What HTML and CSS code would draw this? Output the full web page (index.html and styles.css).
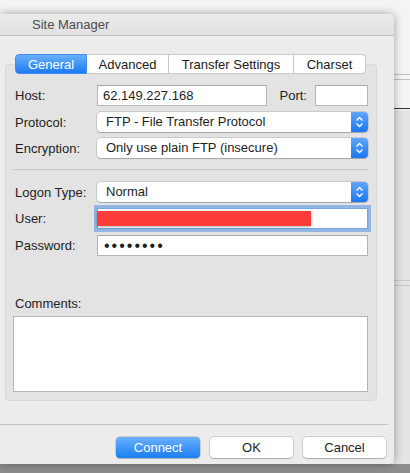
FILE: index.html
```html
<!DOCTYPE html>
<html lang="en">
<head>
  <meta charset="UTF-8" />
  <title>Site Manager</title>
  <link rel="stylesheet" href="styles.css">
</head>
<body>
  <div class="window">
    <div class="titlebar">Site Manager</div>

    <div class="content">
      <div class="panel">
        <div class="tabs">
          <div class="tab active">General</div>
          <div class="tab">Advanced</div>
          <div class="tab">Transfer Settings</div>
          <div class="tab">Charset</div>
        </div>

        <div class="form">
          <label>Host:</label>
          <div class="host-row">
            <div class="input host">62.149.227.168</div>
            <label class="port-label">Port:</label>
            <div class="input port"></div>
          </div>

          <label>Protocol:</label>
          <div class="select">
            <span>FTP - File Transfer Protocol</span>
            <span class="arrows">
              <svg width="17" height="20" viewBox="0 0 17 20"><path d="M5.5 8.5 L8.5 5.5 L11.5 8.5 M5.5 11.5 L8.5 14.5 L11.5 11.5" fill="none" stroke="#fff" stroke-width="1.4"/></svg>
            </span>
          </div>

          <label>Encryption:</label>
          <div class="select">
            <span>Only use plain FTP (insecure)</span>
            <span class="arrows">
              <svg width="17" height="20" viewBox="0 0 17 20"><path d="M5.5 8.5 L8.5 5.5 L11.5 8.5 M5.5 11.5 L8.5 14.5 L11.5 11.5" fill="none" stroke="#fff" stroke-width="1.4"/></svg>
            </span>
          </div>
        </div>

        <hr class="sep">

        <div class="form">
          <label>Logon Type:</label>
          <div class="select">
            <span>Normal</span>
            <span class="arrows">
              <svg width="17" height="20" viewBox="0 0 17 20"><path d="M5.5 8.5 L8.5 5.5 L11.5 8.5 M5.5 11.5 L8.5 14.5 L11.5 11.5" fill="none" stroke="#fff" stroke-width="1.4"/></svg>
            </span>
          </div>

          <label>User:</label>
          <div class="input user">
            <span class="redact"></span>
          </div>

          <label>Password:</label>
          <div class="input password">••••••••</div>
        </div>

        <div class="comments-label">Comments:</div>
        <div class="textarea"></div>
      </div>

      <div class="footer">
        <button class="btn primary">Connect</button>
        <button class="btn">OK</button>
        <button class="btn">Cancel</button>
      </div>
    </div>
  </div>
</body>
</html>
```

FILE: styles.css
```css
html, body {
  margin: 0;
  height: 473px;
  overflow: hidden;
}
body {
  font-family: 'Liberation Sans', Arial, sans-serif;
  font-size: 13px;
  color: #222;
  background:
    linear-gradient(#8d8d8d, #8d8d8d) 0 464px / 100% 9px no-repeat,
    linear-gradient(#333, #333) 394px 108px / 16px 1px no-repeat,
    linear-gradient(#c2c2c2, #c2c2c2) 394px 74px / 16px 1px no-repeat,
    linear-gradient(#c2c2c2, #c2c2c2) 394px 79px / 16px 1px no-repeat,
    linear-gradient(#c8c8c8, #c8c8c8) 394px 280px / 16px 1px no-repeat,
    linear-gradient(#c8c8c8, #c8c8c8) 394px 285px / 16px 1px no-repeat,
    linear-gradient(#e4e4e4, #e4e4e4) 394px 110px / 16px 354px no-repeat,
    #f4f4f4;
}
.window {
  margin-top: 14px;
  width: 394px;
  height: 450px;
  background: #ececec;
  border-radius: 0 5px 5px 0;
  box-shadow: 0 0 10px rgba(0, 0, 0, 0.35);
  display: flex;
  flex-direction: column;
}
.titlebar {
  height: 21px;
  line-height: 22px;
  padding-left: 32px;
  color: #4c4c4c;
  background: linear-gradient(#ebebeb, #e1e1e1);
  border-bottom: 1px solid #c4c4c4;
  border-radius: 0 5px 0 0;
}
.content {
  padding: 28px 0 0 5px;
  flex: 1;
  display: flex;
  flex-direction: column;
}
.panel {
  width: 372px;
  background: #e3e3e3;
  border: 1px solid #d8d8d8;
  border-radius: 4px;
  padding: 0 8px 8px 7px;
  box-sizing: border-box;
}
.tabs {
  display: flex;
  justify-content: center;
  margin: -11px 0 11px 0;
}
.tab {
  height: 20px;
  line-height: 19px;
  padding: 0;
  white-space: nowrap;
  background: #fff;
  border: 1px solid #c8c8c8;
  border-left: none;
  box-sizing: border-box;
  color: #1a1a1a;
  text-align: center;
}
.tab:first-child {
  border-left: 1px solid #c8c8c8;
  border-radius: 4px 0 0 4px;
}
.tab:last-child {
  border-radius: 0 4px 4px 0;
}
.tab.active {
  background: linear-gradient(#69aefb, #1c7bf3);
  border-color: #3d8ef0;
  color: #fff;
  width: 72px;
}
.tab:nth-child(2) { width: 82px; }
.tab:nth-child(3) { width: 125px; }
.tab:nth-child(4) { width: 72px; }

.form {
  display: grid;
  grid-template-columns: 84px 1fr;
  row-gap: 6px;
  align-items: center;
}
.form label {
  padding-left: 2px;
  color: #1e1e1e;
}
.host-row {
  display: flex;
  align-items: center;
}
.input {
  height: 21px;
  line-height: 20px;
  box-sizing: border-box;
  background: #fff;
  border: 1px solid #b5b5b5;
  border-top-color: #a9a9a9;
  padding-left: 5px;
  color: #1e1e1e;
}
.input.host { flex: 1; }
.host-row .port-label {
  margin: 0 8px 0 13px;
  padding: 0;
}
.input.port { width: 53px; }
.select {
  height: 20px;
  line-height: 20px;
  background: #fff;
  border-radius: 4px;
  box-shadow: 0 0 0 0.5px rgba(0, 0, 0, 0.22), 0 1px 1px rgba(0, 0, 0, 0.18);
  display: flex;
  justify-content: space-between;
  padding-left: 9px;
  overflow: hidden;
  color: #1e1e1e;
}
.arrows {
  width: 17px;
  height: 20px;
  background: linear-gradient(#5fa6fb, #1a76f1);
}
.arrows svg { display: block; }
.input.user {
  position: relative;
  border-color: #79a6de;
  box-shadow: 0 0 0 3px rgba(120, 165, 225, 0.75);
}
.redact {
  position: absolute;
  left: -1px;
  top: 2px;
  width: 214px;
  height: 15px;
  background: #fd3b3b;
  box-shadow: 0 1px 3px rgba(0, 0, 0, 0.3);
}
.input.password {
  font-size: 16px;
  letter-spacing: 2px;
  line-height: 19px;
  padding-left: 6px;
}
.sep {
  border: none;
  border-top: 1px solid #c6c6c6;
  margin: 11px 0 12px 0;
}
.comments-label {
  margin: 40px 0 4px 2px;
  line-height: 16px;
}
.textarea {
  height: 76px;
  background: #fff;
  border: 1px solid #b5b5b5;
  box-sizing: border-box;
}
.footer {
  margin: 23px 6px 0 -5px;
  border-top: 1px solid #c4c4c4;
  padding: 12px 2px 0 0;
  display: flex;
  justify-content: flex-end;
  gap: 10px;
}
.btn {
  font-family: 'Liberation Sans', Arial, sans-serif;
  font-size: 13px;
  width: 83px;
  height: 21px;
  padding: 0;
  border: none;
  border-radius: 4px;
  background: #fff;
  color: #1e1e1e;
  box-shadow: 0 0 0 0.5px rgba(0, 0, 0, 0.25), 0 1px 1px rgba(0, 0, 0, 0.15);
}
.btn.primary {
  width: 84px;
  background: linear-gradient(#6ab0fb, #1a7ef3);
  color: #fff;
}
```
